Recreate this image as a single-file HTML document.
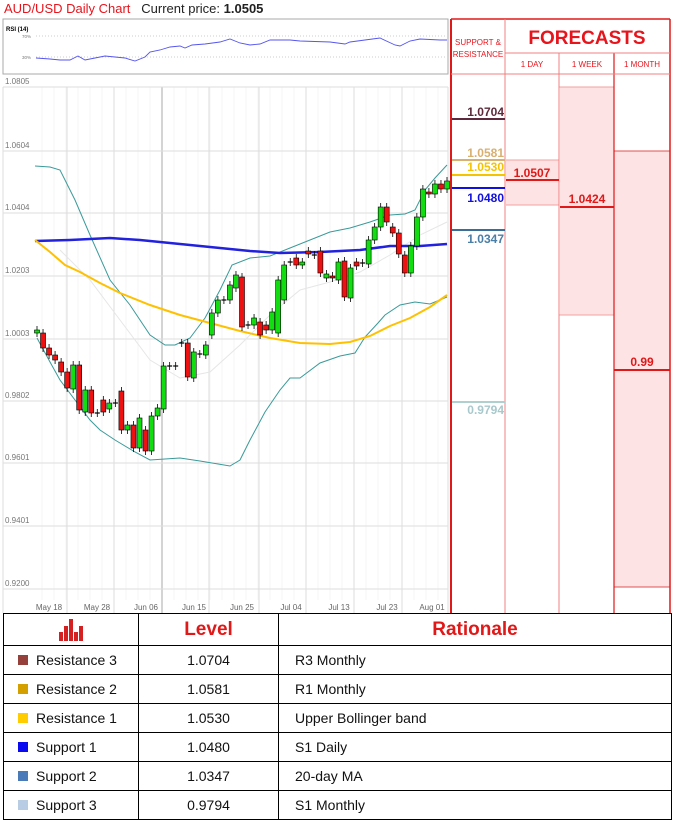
<!DOCTYPE html>
<html><head><meta charset="utf-8"><style>
*{margin:0;padding:0;box-sizing:border-box}
body{width:675px;height:820px;background:#fff;position:relative;overflow:hidden;font-family:"Liberation Sans",sans-serif}
.abs{position:absolute}
table{position:absolute;left:3px;top:613px;width:669px;border-collapse:collapse}
td{border:1.5px solid #000;height:29px;font-size:14px;color:#111}
td.c1{width:135px;padding-left:14px;white-space:nowrap}
td.c2{width:140px;text-align:center}
td.c3{padding-left:16px}
.sq{display:inline-block;width:10px;height:10px;margin-right:8px;vertical-align:0}
</style></head><body>
<div class="abs" style="left:4px;top:1px;font-size:13px;white-space:nowrap"><span style="color:#e8141c">AUD/USD Daily Chart</span> &nbsp;&nbsp;<span style="color:#222">Current price: <b>1.0505</b></span></div>
<svg class="abs" style="left:0;top:0" width="675" height="620" id="s">
<rect x="3" y="19" width="445" height="55" fill="#fff" stroke="#aaa"/>
<text x="6" y="31" font-size="6" font-weight="bold" font-family="Liberation Sans">RSI (14)</text>
<text x="22" y="38" font-size="4.5" fill="#777" font-family="Liberation Sans">70%</text>
<text x="22" y="59" font-size="4.5" fill="#777" font-family="Liberation Sans">30%</text>
<line x1="36" y1="36" x2="447" y2="36" stroke="#999" stroke-dasharray="1,2" stroke-width="0.6"/>
<line x1="36" y1="57" x2="447" y2="57" stroke="#999" stroke-dasharray="1,2" stroke-width="0.6"/>
<polyline fill="none" stroke="#5555ee" stroke-width="0.9" points="36,58 50,59 60,60 70,60 78,56 85,60 95,58 105,56 115,57 125,58 135,61 145,57 150,52 160,50 170,47 180,46 185,48 192,45 205,44 220,42 230,39 240,43 250,45 260,44 270,40 290,40 300,41 330,42 345,44 350,42 365,40 380,38 395,45 400,46 410,41 420,39 440,40 447,40"/>
<g id="grid"></g>
<g id="chart"></g>
<rect x="506" y="160" width="53" height="45" fill="#fde3e3"/>
<rect x="560" y="87" width="54" height="228" fill="#fde3e3"/>
<rect x="614" y="151" width="56" height="436" fill="#fde3e3"/>
<line x1="559" y1="87" x2="614" y2="87" stroke="#f3a0a0"/>
<line x1="559" y1="315" x2="614" y2="315" stroke="#f3a0a0"/>
<line x1="506" y1="160" x2="559" y2="160" stroke="#f3a0a0"/>
<line x1="506" y1="205" x2="559" y2="205" stroke="#f3a0a0"/>
<line x1="614" y1="151" x2="670" y2="151" stroke="#e05050"/>
<line x1="614" y1="587" x2="670" y2="587" stroke="#e05050"/>
<line x1="451" y1="19" x2="451" y2="613" stroke="#e01818" stroke-width="2"/>
<line x1="670" y1="19" x2="670" y2="613" stroke="#e01818" stroke-width="1.5"/>
<line x1="451" y1="19" x2="670" y2="19" stroke="#e01818" stroke-width="1.5"/>
<line x1="505" y1="19" x2="505" y2="613" stroke="#f08080"/>
<line x1="559" y1="53" x2="559" y2="613" stroke="#f08080"/>
<line x1="614" y1="53" x2="614" y2="613" stroke="#e01818" stroke-width="1.2"/>
<line x1="505" y1="53" x2="670" y2="53" stroke="#f08080"/>
<line x1="451" y1="74" x2="670" y2="74" stroke="#f08080"/>
<text x="478" y="45" font-size="8" fill="#e8141c" text-anchor="middle" font-family="Liberation Sans">SUPPORT &amp;</text>
<text x="478" y="57" font-size="8" fill="#e8141c" text-anchor="middle" font-family="Liberation Sans">RESISTANCE</text>
<text x="587" y="44" font-size="19" font-weight="bold" fill="#e8141c" text-anchor="middle" font-family="Liberation Sans">FORECASTS</text>
<text x="532" y="67" font-size="8" fill="#e8141c" text-anchor="middle" font-family="Liberation Sans">1 DAY</text>
<text x="587" y="67" font-size="8" fill="#e8141c" text-anchor="middle" font-family="Liberation Sans">1 WEEK</text>
<text x="642" y="67" font-size="8" fill="#e8141c" text-anchor="middle" font-family="Liberation Sans">1 MONTH</text>
<g font-family="Liberation Sans" font-size="12" font-weight="bold" text-anchor="end">
<line x1="452" y1="119" x2="505" y2="119" stroke="#5c2a3c" stroke-width="2"/><text x="504" y="116" fill="#5c2a3c">1.0704</text>
<text x="504" y="157" fill="#d8b070">1.0581</text><line x1="452" y1="160" x2="505" y2="160" stroke="#d8b070" stroke-width="2"/>
<text x="504" y="171" fill="#f5c400">1.0530</text><line x1="452" y1="175" x2="505" y2="175" stroke="#f5c400" stroke-width="2"/>
<line x1="452" y1="188" x2="505" y2="188" stroke="#1010e0" stroke-width="2"/><text x="504" y="202" fill="#1010e0">1.0480</text>
<line x1="452" y1="230" x2="505" y2="230" stroke="#3a6e96" stroke-width="2"/><text x="504" y="243" fill="#4a7ea6">1.0347</text>
<line x1="452" y1="402" x2="505" y2="402" stroke="#b0d0d0" stroke-width="2"/><text x="504" y="414" fill="#a8c8cc">0.9794</text>
<text x="532" y="177" fill="#e01818" style="text-anchor:middle">1.0507</text>
<line x1="506" y1="180" x2="559" y2="180" stroke="#e01818" stroke-width="2"/>
<text x="587" y="203" fill="#e01818" style="text-anchor:middle">1.0424</text>
<line x1="560" y1="207" x2="614" y2="207" stroke="#e01818" stroke-width="2"/>
<text x="642" y="366" fill="#e01818" style="text-anchor:middle">0.99</text>
<line x1="614" y1="370" x2="670" y2="370" stroke="#e01818" stroke-width="2"/>
</g>
</svg>
<table>
<tr style="height:32px"><td class="c1" style="text-align:center;padding-left:0">
<svg width="26" height="26" viewBox="0 0 26 26"><rect x="1" y="17" width="4" height="9" fill="#d42020"/><rect x="6" y="11" width="4" height="15" fill="#d42020"/><rect x="11" y="4" width="4" height="22" fill="#d42020"/><rect x="16" y="17" width="4" height="9" fill="#d42020"/><rect x="21" y="11" width="4" height="15" fill="#d42020"/></svg></td>
<td class="c2" style="font-size:19px;font-weight:bold;color:#e01818">Level</td>
<td class="c3" style="text-align:center;padding:0;font-size:19px;font-weight:bold;color:#e01818">Rationale</td></tr>
<tr><td class="c1"><span class="sq" style="background:#96403c"></span>Resistance 3</td><td class="c2">1.0704</td><td class="c3">R3 Monthly</td></tr>
<tr><td class="c1"><span class="sq" style="background:#d4a000"></span>Resistance 2</td><td class="c2">1.0581</td><td class="c3">R1 Monthly</td></tr>
<tr><td class="c1"><span class="sq" style="background:#ffcc00"></span>Resistance 1</td><td class="c2">1.0530</td><td class="c3">Upper Bollinger band</td></tr>
<tr><td class="c1"><span class="sq" style="background:#0a0af0"></span>Support 1</td><td class="c2">1.0480</td><td class="c3">S1 Daily</td></tr>
<tr><td class="c1"><span class="sq" style="background:#4a7ab8"></span>Support 2</td><td class="c2">1.0347</td><td class="c3">20-day MA</td></tr>
<tr><td class="c1"><span class="sq" style="background:#b8cce4"></span>Support 3</td><td class="c2">0.9794</td><td class="c3">S1 Monthly</td></tr>
</table>
<script>
var NS="http://www.w3.org/2000/svg";
function el(p,t,a){var e=document.createElementNS(NS,t);for(var k in a)e.setAttribute(k,a[k]);p.appendChild(e);return e;}
var g=document.getElementById("grid"),c=document.getElementById("chart");
for(var x=42;x<448;x+=12)el(g,"line",{x1:x,y1:87,x2:x,y2:600,stroke:"#f0f0f0","stroke-width":0.6});
var vx=[67,114,162,209,259,306,354,402,448];
vx.forEach(function(x,i){el(g,"line",{x1:x,y1:87,x2:x,y2:613,stroke:i==2?"#aaa":"#ddd","stroke-width":1});});
el(g,"line",{x1:3,y1:87,x2:3,y2:613,stroke:"#ddd"});
var hy=[87,151,213,276,339,401,463,526,589],lb=["1.0805","1.0604","1.0404","1.0203","1.0003","0.9802","0.9601","0.9401","0.9200"];
hy.forEach(function(y,i){el(g,"line",{x1:3,y1:y,x2:448,y2:y,stroke:"#ddd"});var t=el(g,"text",{x:5,y:y-3,"font-size":8,fill:"#777","font-family":"Liberation Sans"});t.textContent=lb[i];});
var dl=["May 18","May 28","Jun 06","Jun 15","Jun 25","Jul 04","Jul 13","Jul 23","Aug 01"],dx=[49,97,146,194,242,291,339,387,432];
dl.forEach(function(s,i){var t=el(g,"text",{x:dx[i],y:610,"font-size":8,fill:"#666","text-anchor":"middle","font-family":"Liberation Sans"});t.textContent=s;});
function pl(pts,col,w){el(c,"polyline",{points:pts,fill:"none",stroke:col,"stroke-width":w});}
pl("60,250 90,280 120,320 150,360 180,378 210,372 240,345 270,315 300,290 330,282 360,272 390,255 420,235 447,222","#e6e6e6",1);
pl("35,166 50,167 60,170 75,200 90,235 110,280 130,305 150,335 165,345 175,345 190,338 205,318 220,290 232,265 250,258 270,256 290,248 310,240 330,232 350,228 370,222 390,215 405,214 415,210 425,190 435,178 447,165","#3a9a9a",1);
pl("37,338 50,362 60,380 75,400 90,420 100,430 115,440 135,452 150,460 180,458 200,461 230,466 240,460 250,440 265,412 280,390 290,378 300,378 320,363 340,356 355,353 365,337 378,323 385,315 400,305 415,302 430,304 447,297","#3a9a9a",1);
pl("35,241 70,240 110,238 140,240 170,243 210,247 250,251 280,253 320,252 360,250 390,246 420,246 447,244","#2222dd",2.5);
pl("35,240 50,252 65,265 80,272 100,283 120,293 150,305 180,315 210,323 240,331 270,338 300,343 330,344 350,342 370,336 390,326 410,318 430,307 447,295","#ffc000",2);
var cs=[[333,330],[333,348],[348,355],[355,360],[362,372],[372,388],[389,365],[365,410],[412,390],[390,413],[413,413],[400,412],[409,403],[403,403],[391,430],[430,425],[425,448],[448,418],[430,451],[451,416],[416,408],[409,366],[366,366],[366,366],[343,343],[343,377],[378,352],[354,354],[355,345],[335,313],[313,300],[300,300],[300,285],[288,275],[277,327],[325,325],[325,318],[322,335],[325,330],[330,312],[333,280],[300,265],[262,262],[258,265],[265,262],[251,254],[255,255],[251,273],[278,274],[276,278],[280,262],[261,297],[298,268],[262,266],[263,263],[264,240],[240,227],[227,207],[207,222],[227,233],[233,254],[255,273],[273,246],[246,217],[217,189],[192,194],[194,184],[184,189],[189,181]];
var n=cs.length,step=(447-37)/(n-1);
cs.forEach(function(d,i){var x=37+i*step,o=d[0],cl=d[1],top=Math.min(o,cl),bot=Math.max(o,cl);
el(c,"line",{x1:x,y1:top-4,x2:x,y2:bot+4,stroke:"#000","stroke-width":0.8});
var col=cl<o?"#11dd11":(cl>o?"#ee1111":"#000");
if(bot-top<1.5)el(c,"line",{x1:x-2.5,y1:top,x2:x+2.5,y2:top,stroke:"#000","stroke-width":1.2});
else el(c,"rect",{x:x-2.5,y:top,width:5,height:bot-top,fill:col,stroke:"#000","stroke-width":0.6});});
</script>
</body></html>
